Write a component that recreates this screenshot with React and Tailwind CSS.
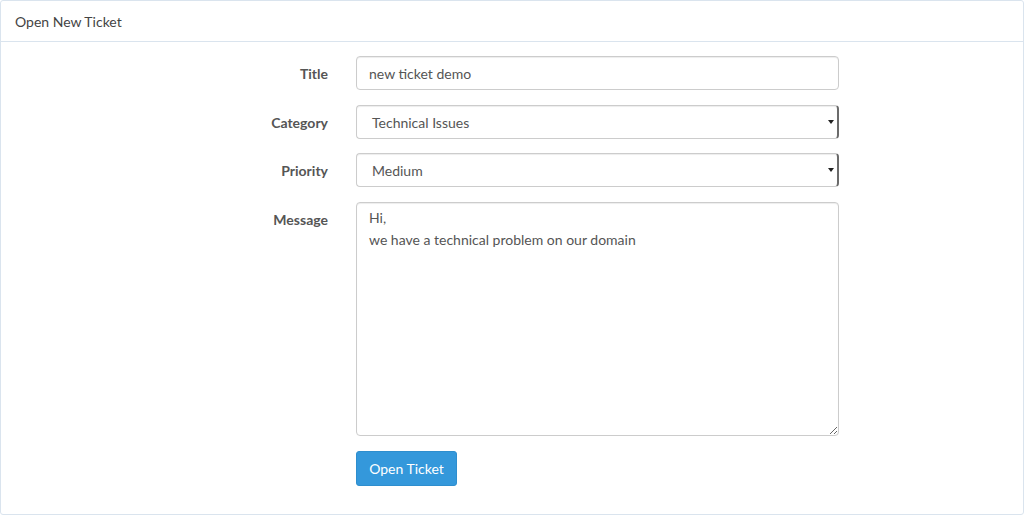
import React from 'react';

const fieldClass =
  'w-[483px] h-[34px] border border-[#ccc] rounded-[4px] bg-white text-[14px] text-[#555] outline-none';

const SelectBox = ({ value }) => (
  <div className={`${fieldClass} relative flex items-center pl-[15px] border-r-2 border-r-[#6b6b6b] shadow-[inset_0_1px_1px_rgba(0,0,0,0.075)]`}>
    <span>{value}</span>
    <span className="absolute right-[3px] top-1/2 -translate-y-1/2 w-0 h-0 border-l-[3px] border-r-[3px] border-t-[4px] border-l-transparent border-r-transparent border-t-[#222]" />
  </div>
);

const Row = ({ label, top, className = '', children }) => (
  <div className={`flex ${top ? 'items-start' : 'items-center'} ${className}`}>
    <label className={`w-[327px] text-right font-bold text-[14px] text-[#555] ${top ? 'pt-[7px]' : ''}`}>
      {label}
    </label>
    <div className="ml-[28px]">{children}</div>
  </div>
);

const App = () => {
  return (
    <div className="w-[1024px] h-[516px] bg-white" style={{ fontFamily: 'Lato, "Open Sans", sans-serif' }}>
      <div className="border border-[#dae4ee] rounded-[3px] bg-white">
        <div className="h-[41px] px-[14px] flex items-center border-b border-[#dae4ee] text-[14px] text-[#444]">
          Open New Ticket
        </div>
        <div className="pt-[14px] pb-[28px] flex flex-col gap-[15px]">
          <Row label="Title">
            <input
              readOnly
              value="new ticket demo"
              className={`${fieldClass} block px-[12px] shadow-[inset_0_1px_1px_rgba(0,0,0,0.075)]`}
            />
          </Row>
          <Row label="Category">
            <SelectBox value="Technical Issues" />
          </Row>
          <Row label="Priority" className="-mt-[1px]">
            <SelectBox value="Medium" />
          </Row>
          <Row label="Message" top>
            <textarea
              readOnly
              value={'Hi,\nwe have a technical problem on our domain'}
              className="block w-[483px] h-[234px] border border-[#ccc] rounded-[4px] bg-white text-[14px] leading-[22px] text-[#555] px-[12px] py-[4px] outline-none resize-y shadow-[inset_0_1px_1px_rgba(0,0,0,0.075)]"
            />
          </Row>
          <div className="flex">
            <div className="w-[355px]" />
            <button className="w-[101px] h-[35px] rounded-[3px] bg-[#3498db] border border-[#2e8ece] text-white text-[14px]">
              Open Ticket
            </button>
          </div>
        </div>
      </div>
    </div>
  );
};

export default App;
